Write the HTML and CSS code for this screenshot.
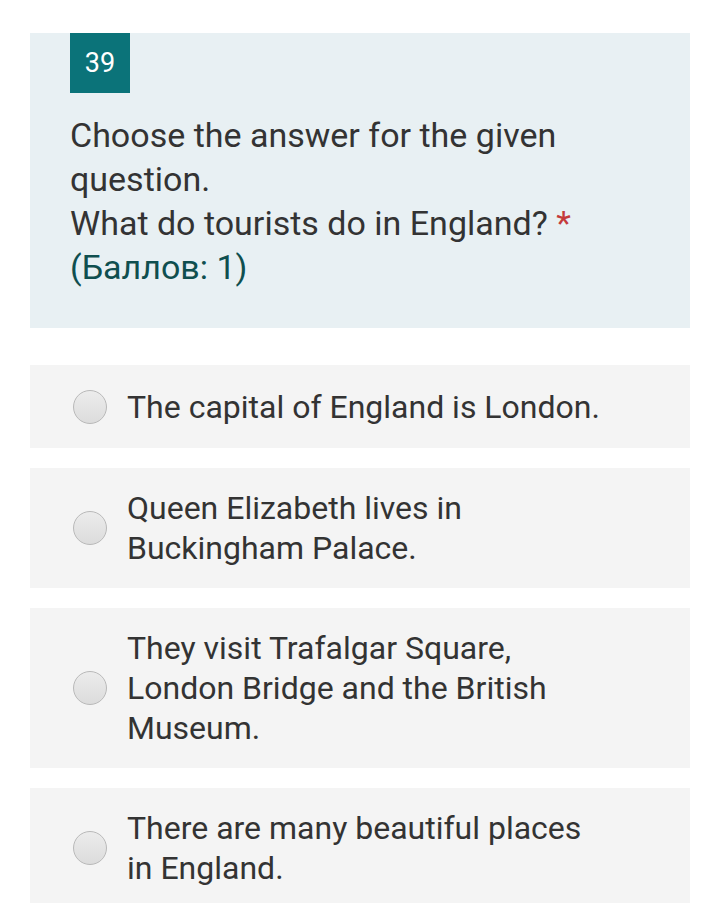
FILE: index.html
```html
<!DOCTYPE html>
<html lang="ru">
<head>
<meta charset="utf-8">
<link rel="stylesheet" href="styles.css">
</head>
<body>
<div class="page">
  <section class="question">
    <div class="badge">39</div>
    <div class="qtext">
      <div>Choose the answer for the given question.</div>
      <div>What do tourists do in England? <span class="req">*</span></div>
      <div class="points">(Баллов: 1)</div>
    </div>
  </section>
  <div class="options">
    <label class="option"><span class="radio"></span><span class="otext">The capital of England is London.</span></label>
    <label class="option"><span class="radio"></span><span class="otext">Queen Elizabeth lives in<br>Buckingham Palace.</span></label>
    <label class="option"><span class="radio"></span><span class="otext">They visit Trafalgar Square,<br>London Bridge and the British<br>Museum.</span></label>
    <label class="option"><span class="radio"></span><span class="otext">There are many beautiful places<br>in England.</span></label>
  </div>
</div>
</body>
</html>
```
FILE: styles.css
```css
html, body {
  margin: 0;
  padding: 0;
  background: #ffffff;
}
body {
  font-family: Roboto, "Noto Sans", Arial, sans-serif;
  color: #333333;
  overflow: hidden;
  height: 903px;
}
.page {
  padding: 33px 30px 0 30px;
}
.question {
  background: #e8f0f3;
  padding: 0 40px 39px 40px;
}
.badge {
  width: 60px;
  height: 60px;
  background: #0b7379;
  color: #ffffff;
  font-size: 27px;
  display: flex;
  align-items: center;
  justify-content: center;
}
.qtext {
  margin-top: 20px;
  font-size: 34px;
  line-height: 44px;
  color: #333333;
}
.req {
  color: #c43b3b;
}
.points {
  color: #0f4f4f;
}
.options {
  margin-top: 37px;
  display: flex;
  flex-direction: column;
  gap: 20px;
}
.option {
  display: flex;
  align-items: center;
  background: #f4f4f4;
  min-height: 83px;
  box-sizing: border-box;
  padding: 20px 20px 20px 43px;
  font-size: 32px;
  line-height: 40px;
  color: #333333;
}
.radio {
  flex: none;
  width: 32px;
  height: 32px;
  border-radius: 50%;
  border: 1px solid #b9b9b9;
  background: linear-gradient(#ececec, #dcdcdc);
  margin-right: 20px;
}
.otext {
  display: block;
}
```
